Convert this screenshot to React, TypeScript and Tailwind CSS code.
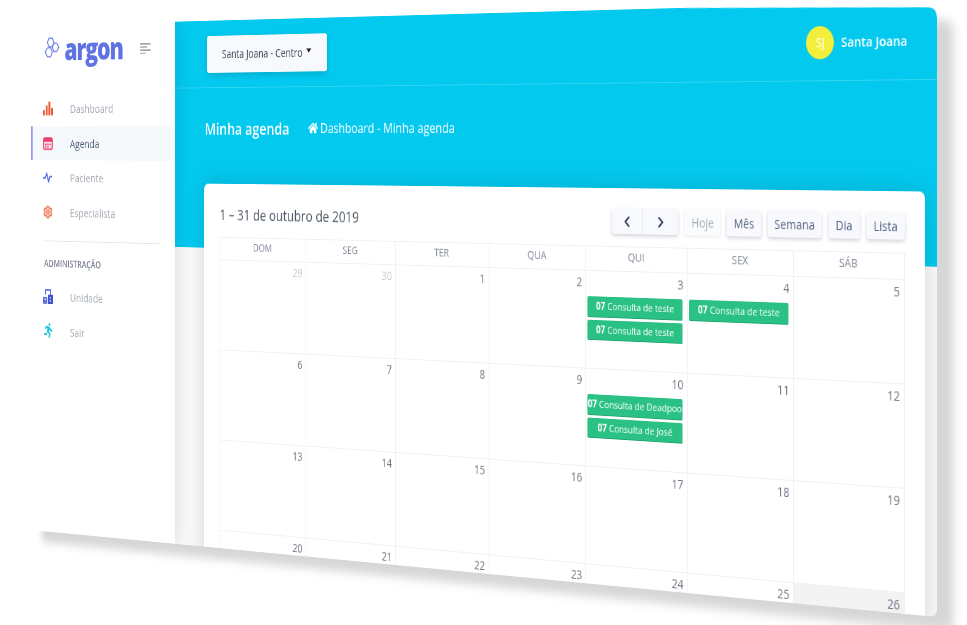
import { ChevronLeft, ChevronRight, Settings } from "lucide-react";
import { FaHome, FaRunning } from "react-icons/fa";

type CalendarEvent = { hour: string; title: string };

const weekDays = ["DOM", "SEG", "TER", "QUA", "QUI", "SEX", "SÁB"];

const weeks = [
  [29, 30, 1, 2, 3, 4, 5],
  [6, 7, 8, 9, 10, 11, 12],
  [13, 14, 15, 16, 17, 18, 19],
  [20, 21, 22, 23, 24, 25, 26],
];

const eventsByDay: Record<number, CalendarEvent[]> = {
  3: [
    { hour: "07", title: "Consulta de teste" },
    { hour: "07", title: "Consulta de teste" },
  ],
  4: [{ hour: "07", title: "Consulta de teste" }],
  10: [
    { hour: "07", title: "Consulta de Deadpool" },
    { hour: "07", title: "Consulta de José" },
  ],
};

function BarsIcon() {
  return (
    <svg width="18" height="18" viewBox="0 0 18 18" fill="#ee5a36">
      <rect x="0" y="11" width="3.5" height="7" rx="1" />
      <rect x="5" y="5" width="3.5" height="13" rx="1" />
      <rect x="10" y="0" width="3.5" height="18" rx="1" />
      <rect x="15" y="8" width="3" height="10" rx="1" />
    </svg>
  );
}

function CalendarIcon() {
  return (
    <svg width="18" height="18" viewBox="0 0 18 18">
      <rect x="1.2" y="2.2" width="15.6" height="14.6" rx="2" fill="#fbe3ea" stroke="#ea3f70" strokeWidth="2" />
      <rect x="1" y="2" width="16" height="5" fill="#ea3f70" />
      <rect x="4" y="9.5" width="2.5" height="2" fill="#ea3f70" />
      <rect x="8" y="9.5" width="2.5" height="2" fill="#ea3f70" />
      <rect x="12" y="9.5" width="2.5" height="2" fill="#ea3f70" />
      <rect x="4" y="13" width="2.5" height="1.6" fill="#ea3f70" />
      <rect x="8" y="13" width="2.5" height="1.6" fill="#ea3f70" />
    </svg>
  );
}

function PulseIcon() {
  return (
    <svg width="17" height="16" viewBox="0 0 20 18" fill="none" stroke="#5e72e4" strokeWidth="2.6" strokeLinejoin="round">
      <polyline points="0,10 5,10 8,3 12,16 15,8 20,8" />
    </svg>
  );
}

function BuildingIcon() {
  return (
    <svg width="18" height="20" viewBox="0 0 18 20">
      <path d="M5 8V2h9v7" fill="none" stroke="#5e72e4" strokeWidth="2" />
      <rect x="0" y="11" width="8" height="9" fill="#5e72e4" />
      <rect x="9" y="8" width="9" height="12" fill="#3f55cf" />
      <rect x="3" y="13" width="2" height="2" fill="#dfe4fb" />
      <rect x="12.5" y="11" width="2" height="2" fill="#dfe4fb" />
      <rect x="12.5" y="15" width="2" height="2" fill="#dfe4fb" />
    </svg>
  );
}

function LogoMark() {
  return (
    <svg width="28" height="26" viewBox="0 0 28 26" fill="none" stroke="#6a7be6" strokeWidth="1.7">
      <polygon points="9,1 15,1 18,6.5 15,12 9,12 6,6.5" />
      <polygon points="18,7.5 23,7.5 27,13 23,18.5 18,18.5 15,13" />
      <polygon points="6,13.5 12,13.5 15,19 12,25 6,25 2,19" />
    </svg>
  );
}

function NavItem({ icon, label, active }: { icon: React.ReactNode; label: string; active?: boolean }) {
  return (
    <div
      className={
        active
          ? "flex h-[44.5px] w-[249px] items-center border-l-[3px] border-[#8f9cf0] bg-[#f6f9fc] pl-[19px] text-[#525f7f]"
          : "flex h-[44.5px] w-[249px] items-center pl-[22px] text-[#a3a9b3]"
      }
    >
      <span className="flex w-[49px] shrink-0 items-center">{icon}</span>
      <span className="text-[15px]">{label}</span>
    </div>
  );
}

function Sidebar() {
  return (
    <aside className="relative z-10 flex h-full w-[256px] shrink-0 flex-col bg-white shadow-[0_0_30px_rgba(0,0,0,0.14)]">
      <div className="flex h-[86px] items-start pl-[24px] pt-[8px]">
        <span className="mt-[8px]">
          <LogoMark />
        </span>
        <span className="ml-[9px] text-[38px] leading-[46px] font-extrabold tracking-[-2px] text-[#5e72e4]">argon</span>
        <div className="mt-[18px] ml-[31px] flex w-[18px] flex-col gap-[2px]">
          <div className="h-[2px] w-[18px] bg-[#9ca3af]" />
          <div className="h-[2px] w-[12px] bg-[#b4bac2]" />
          <div className="h-[2px] w-[18px] bg-[#9ca3af]" />
          <div className="h-[2px] w-[9px] bg-[#b4bac2]" />
        </div>
      </div>
      <nav>
        <NavItem icon={<BarsIcon />} label="Dashboard" />
        <NavItem icon={<CalendarIcon />} label="Agenda" active />
        <NavItem icon={<PulseIcon />} label="Paciente" />
        <NavItem icon={<Settings size={18} strokeWidth={3} color="#ef7d5d" />} label="Especialista" />
      </nav>
      <div className="mt-[15px] ml-[24px] w-[206px] border-t border-[#e2e4e8]" />
      <div className="mt-[21px] ml-[24px] text-[12.5px] leading-[16px] font-semibold text-[#7b838f]">ADMINISTRAÇÃO</div>
      <nav className="mt-[12px]">
        <NavItem icon={<BuildingIcon />} label="Unidade" />
        <NavItem icon={<FaRunning size={19} color="#1cc6dd" />} label="Sair" />
      </nav>
    </aside>
  );
}

function ToolbarButton({ label, muted }: { label: string; muted?: boolean }) {
  return (
    <button
      className={
        muted
          ? "h-[29px] w-[48px] rounded-[3px] bg-[#fafbfd] text-[14px] text-[#a5acb6] shadow-[0_1px_4px_rgba(50,50,93,0.12)]"
          : "h-[29px] rounded-[3px] bg-[#f7f9fc] px-[9px] text-[14px] text-[#525f7f] shadow-[0_2px_4px_rgba(50,50,93,0.22)]"
      }
    >
      {label}
    </button>
  );
}

function Calendar() {
  return (
    <div className="ml-[50px] mr-[15px] rounded-[7px] bg-white pl-[26px] pr-[25px] pt-[23px] shadow-[0_0_30px_rgba(0,0,0,0.14)]">
      <div className="flex h-[29px] items-center justify-between">
        <h2 className="text-[18.6px] text-[#4b5563]">1 – 31 de outubro de 2019</h2>
        <div className="flex items-center gap-[9px]">
          <div className="flex h-[29px] w-[92px] rounded-[3px] bg-[#f7f9fc] text-[#32325d] shadow-[0_2px_4px_rgba(50,50,93,0.22)]">
            <span className="flex w-[43px] items-center justify-center border-r border-[#e6e9ef]">
              <ChevronLeft size={20} strokeWidth={2.5} />
            </span>
            <span className="flex flex-1 items-center justify-center">
              <ChevronRight size={20} strokeWidth={2.5} />
            </span>
          </div>
          <ToolbarButton label="Hoje" muted />
          <ToolbarButton label="Mês" />
          <ToolbarButton label="Semana" />
          <ToolbarButton label="Dia" />
          <ToolbarButton label="Lista" />
        </div>
      </div>

      <div className="mt-[14px] border-l border-t border-[#eeeff1]">
        <div className="grid grid-cols-7">
          {weekDays.map((day) => (
            <div
              key={day}
              className="h-[28px] border-b border-r border-[#eeeff1] pb-[4px] text-center text-[13px] leading-[23px] font-medium text-[#7d8795]"
            >
              {day}
            </div>
          ))}
        </div>
        {weeks.map((week) => (
          <div key={week[0]} className="grid h-[112px] grid-cols-7">
            {week.map((day) => (
              <div
                key={day}
                className={day === 26 ? "border-b border-r border-[#eeeff1] bg-[#f3f3f3]" : "border-b border-r border-[#eeeff1]"}
              >
                <div
                  className={
                    day >= 29
                      ? "pr-[5px] pt-[4px] text-right text-[14px] leading-[18px] text-[#c4c8ce]"
                      : "pr-[5px] pt-[4px] text-right text-[14px] leading-[18px] text-[#6b7280]"
                  }
                >
                  {day}
                </div>
                <div className="mt-[7px] flex flex-col gap-[3px] pl-[2px] pr-[6px]">
                  {(eventsByDay[day] ?? []).map((event, i) => (
                    <div
                      key={i}
                      className="h-[23.5px] overflow-hidden rounded-[2px] border-b border-[#1fa56f] bg-[#2bc184] text-center text-[11.5px] leading-[22px] whitespace-nowrap text-white"
                    >
                      <b>{event.hour}</b> {event.title}
                    </div>
                  ))}
                </div>
              </div>
            ))}
          </div>
        ))}
      </div>
    </div>
  );
}

export default function App() {
  return (
    <div className="h-[625px] w-[967px] overflow-hidden bg-white font-['Open_Sans',sans-serif]">
      {/* flat page is 1366x656, the whole thing is tilted like the marketing shot */}
      <div className="h-[656px] w-[1366px] origin-top-left [filter:blur(0.5px)_drop-shadow(20px_14px_6px_rgba(0,0,0,0.16))] [transform:matrix3d(0.53895,-0.018141,0,-0.00013265,0,0.7689,0,0,0,0,1,0,31,25.6,0,1)]">
        <div className="flex h-full w-full overflow-hidden bg-white [clip-path:path('M0,0L1030,0L1356,6.5Q1366,7.5,1366,18L1366,646Q1366,656,1356,656L0,656Z')]">
          <Sidebar />
          <main className="h-full min-w-0 flex-1 overflow-hidden bg-[#f9f9f9]">
            <div className="bg-[#04c9ef]">
              <header className="flex h-[84px] items-center justify-between border-b border-[#35d5f3] pl-[55px] pr-[37px]">
                <button className="flex h-[46px] w-[197px] items-center justify-center gap-[6px] rounded-[3px] bg-[#f7f9fc] text-[14px] text-[#3d4756] shadow-[0_3px_8px_rgba(0,0,0,0.15)]">
                  Santa Joana - Centro
                  <span className="mb-[5px] border-x-[4px] border-t-[5px] border-x-transparent border-t-[#222]" />
                </button>
                <div className="flex items-center gap-[9px]">
                  <div className="flex h-[36px] w-[36px] items-center justify-center rounded-full bg-[#f3ee3c] text-[14px] text-white">
                    SJ
                  </div>
                  <span className="text-[14.7px] font-semibold text-white">Santa Joana</span>
                </div>
              </header>
              <div className="h-[199px] pl-[51px]">
                <div className="flex h-[100px] items-center text-white">
                  <h1 className="text-[20.5px] font-semibold">Minha agenda</h1>
                  <FaHome size={16} className="ml-[30px]" />
                  <span className="ml-[4px] text-[16.6px]">Dashboard - Minha agenda</span>
                </div>
              </div>
            </div>
            <div className="mt-[-80px]">
              <Calendar />
            </div>
          </main>
        </div>
      </div>
    </div>
  );
}
